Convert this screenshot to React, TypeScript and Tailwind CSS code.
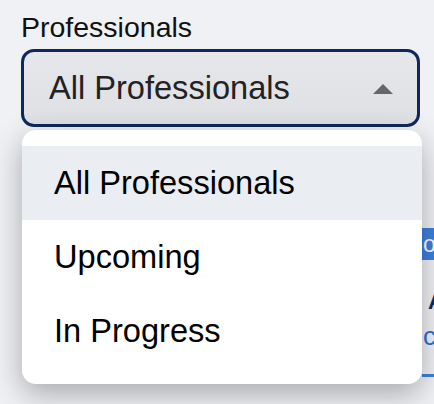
const options = ["All Professionals", "Upcoming", "In Progress"];

const ProfessionalsFilter = () => {
  return (
    <div
      className="relative w-[434px] h-[404px] overflow-hidden bg-[#f0f1f5] px-[21px] pt-[11px]"
      style={{ fontFamily: '"Liberation Sans", Arial, sans-serif' }}
    >
      {/* Label */}
      <div className="text-[28.5px] leading-[32px] text-[#111] mb-[6px]">Professionals</div>

      {/* Select (open) */}
      <div className="relative w-[399px]">
        <div className="flex items-center justify-between h-[78px] rounded-[13px] border-[3px] border-[#0e285e] bg-gradient-to-b from-[#e6e7ea] to-[#dfe0e3] pl-[25px] pr-[24px]">
          <span className="text-[32.6px] leading-none text-[#222]">All Professionals</span>
          <svg width="20" height="10" viewBox="0 0 20 10" className="mt-[1px]">
            <path d="M10 0 L20 10 L0 10 Z" fill="#666" />
          </svg>
        </div>

        {/* Menu */}
        <div className="absolute left-[1px] top-[calc(100%+3px)] z-10 w-[400px] rounded-[14px] bg-white py-[16px] shadow-[0_10px_30px_rgba(0,0,0,0.3)]">
          {options.map((o, i) => (
            <div
              key={o}
              className={`flex items-center h-[74px] pl-[32px] text-[32.6px] leading-none text-black ${
                i === 0 ? "bg-[#eaedf2]" : ""
              }`}
            >
              {o}
            </div>
          ))}
        </div>
      </div>

      {/* Content behind the menu */}
      <div className="ml-[401px] mt-[101px] w-[200px]">
        <div className="flex items-center h-[32px] bg-[#3d80df] pl-[1px] text-[23px] text-white">ok</div>
        <div className="mt-[30px] pl-[6px] text-[22px] leading-[24px] font-bold text-[#0f2a5f]">A</div>
        <div className="mt-[8px] pl-[1px] text-[26px] leading-[28px] text-[#2d6fd2]">c</div>
        <div className="mt-[24px] h-[3px] bg-[#3d80df]" />
      </div>
    </div>
  );
};

export default function App() {
  return <ProfessionalsFilter />;
}
